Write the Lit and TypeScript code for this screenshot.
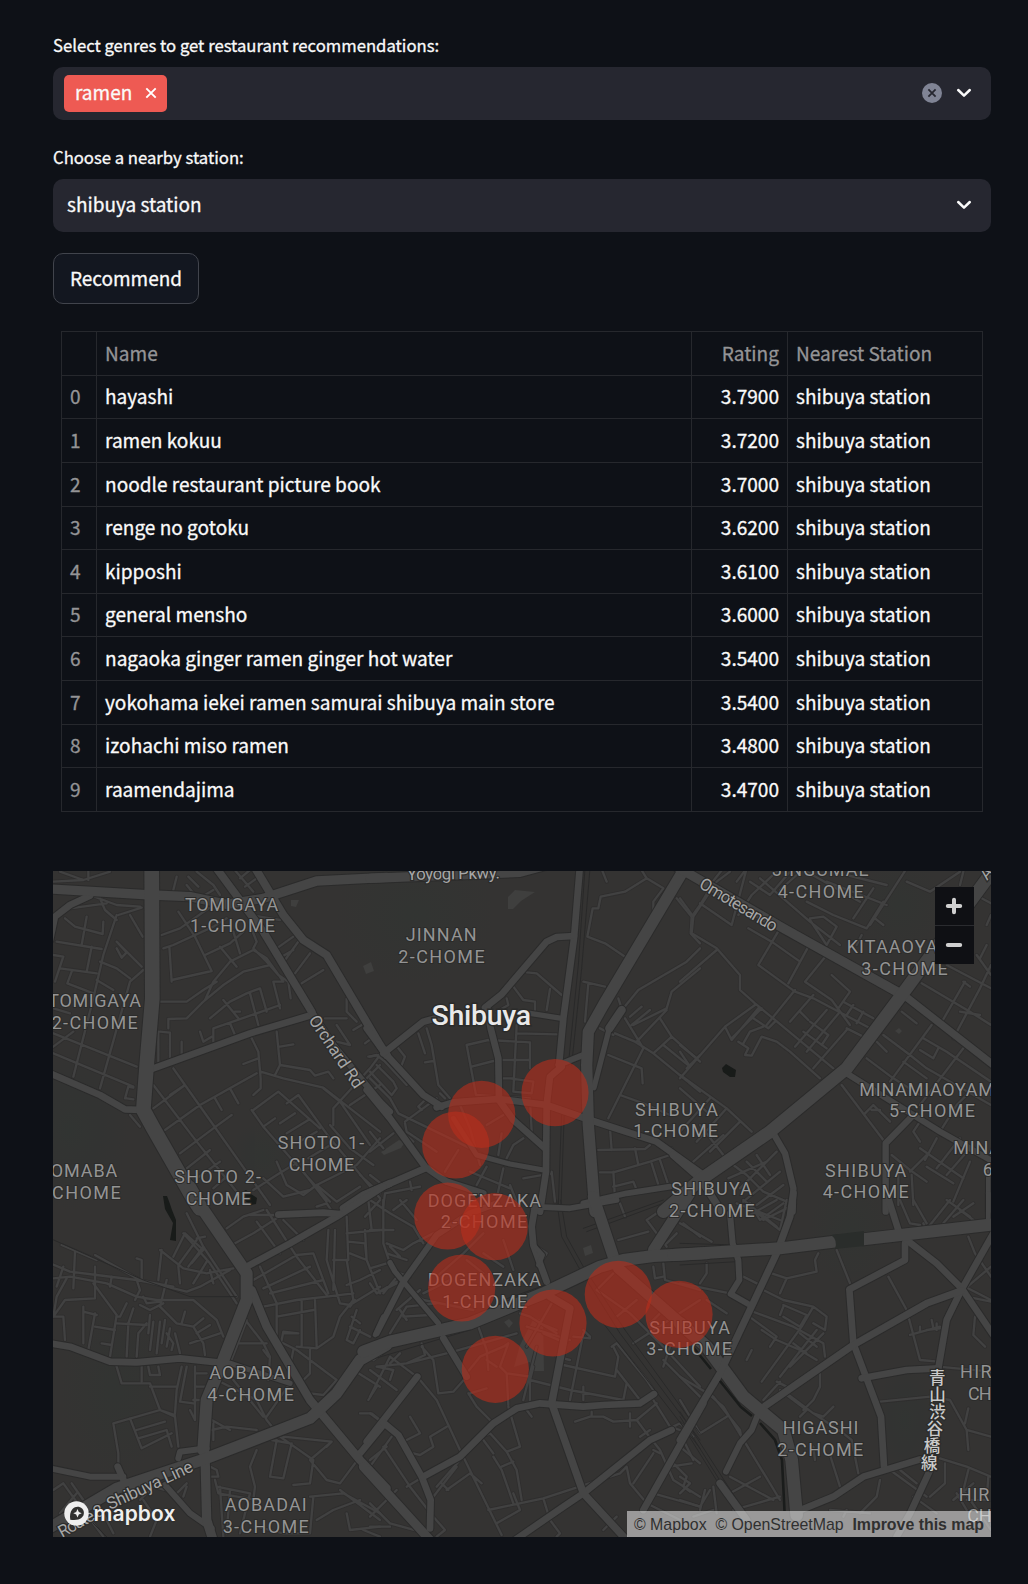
import { LitElement, html, css, svg } from "lit";
import { customElement, property } from "lit/decorators.js";

type Road = [width: number, path: string];
type Label = [x0: number, x1: number, baseline: number, text: string];

interface Sector {
  x: number;
  y: number;
  streets: string;
  roads: Road[];
  rails: string;
  labels: Label[];
}

/* Each sector is drawn at three units per pixel from its own origin. */
const SECTORS: Sector[] = [
  {
    x: 50, y: 865,
    streets: `M10 50L100 45L180 20M115 0L115 45M30 20L100 45M120 90L200 120L270 125M150 100L165 135L200 165M60 130L170 115
      M200 150L160 270L130 400L70 635M205 150L275 128M45 160L75 185L158 207L160 170M110 155L95 240M20 230L155 252M125 245L110 320M30 310L140 325
      M240 150L278 215M200 230L275 305M200 250L215 278L230 262L205 235M150 290L200 310L240 340M280 315L240 350L150 670M65 320L52 355L130 385M140 345L190 375
      M10 270L40 275L15 350M10 430L60 445M10 505L260 605M10 565L250 665M10 545L70 500M225 700L235 665L250 668M230 700L250 703
      M335 210L390 190L490 120M340 250L370 240L490 185L530 160M358 245L365 350M365 345L485 318L435 215L385 140M330 410L410 410L460 375L500 350M355 490L355 462L410 460L460 410L520 360L580 320L660 300
      M465 270L540 235L580 200M510 245L560 305M465 405L490 350L540 290L610 255L650 280L700 350L670 350L690 430M550 200L570 265M600 180L620 230L610 250L650 290L685 330L715 350L722 400
      M480 460L540 410L590 385L630 370L650 440M520 405L565 460M600 385L625 480M555 440L570 440M690 420L620 445L490 490L490 530M460 530L485 515M450 500L460 530M540 475L555 510
      M330 500L360 503L360 580M325 500L325 590M395 530L395 570M680 500L690 600L675 630M690 545L730 538M580 597L625 580M605 520L625 560L632 640L632 670L610 690
      M690 600L780 615L795 632L835 620L850 640M632 620L700 640L820 668L990 800M680 250L730 215M695 275L730 255M735 325L780 265M755 355L820 315M705 285L745 230M600 150L690 165
      M890 400L890 440L920 470M910 495L935 480M825 460L890 460M860 530L900 540M860 480L900 540M945 535L965 520M955 575L990 570
      M370 610L405 660L660 1020M310 660L440 830L560 980M310 730L405 660M345 795L450 720L620 625M390 865L490 790L545 750M410 910L480 855M440 940L510 890M490 970L530 935M540 670L565 715M495 700L515 735M405 660L360 690M240 750L270 785
      M610 735L685 680L810 790M605 735L640 785L675 760M640 785L740 900L840 1010M710 715L745 690L840 820L990 1000M690 775L735 745M710 805L775 765M740 835L800 800M775 880L850 835M610 975L680 930L745 890M680 890L710 960L760 990L800 960L920 900L990 820
      M640 940L700 995L780 975M760 920L830 1010M820 670L870 710L960 840M850 780L850 730L960 610L990 570M840 780L900 850L970 900M900 720L990 660M950 640L990 600M930 930L990 985M800 960L860 1010L930 965
      M370 75L380 35M415 35L445 65M410 60L430 85M440 20L490 60L510 90M465 90L490 75M550 10L610 80M570 40L600 15M585 65L620 40`,
    roads: [
      [20, "M0 225L15 155L60 120L120 92"], [20, "M0 625L150 690L225 733L280 735"], [20, "M300 614L600 505L785 450"],
      [23, "M492 0L640 200L785 440"], [19, "M785 440L850 540L990 710L1020 740"], [24, "M610 0L700 150L760 225L830 270L990 540L1010 570"],
      [28, "M0 72L305 90L420 95L530 118L640 100L800 48L1010 37"], [22, "M880 1030L940 990L1020 955"],
      [44, "M305 0L307 400L290 600L280 735L310 790L430 1000L450 1030"],
    ],
    rails: "",
    labels: [
      [405, 685, 137, "TOMIGAYA"], [420, 675, 202, "1-CHOME"], [-5, 273, 427, "TOMIGAYA"], [5, 263, 492, "2-CHOME"],
      [683, 943, 853, "SHOTO 1-"], [716, 913, 918, "CHOME"], [373, 633, 955, "SHOTO 2-"], [407, 604, 1020, "CHOME"],
      [-34, 202, 937, "KOMABA"], [-48, 212, 1002, "1-CHOME"],
    ],
  },
  {
    x: 370, y: 865,
    streets: `M690 0L710 50M990 250L950 290L805 375L760 430M805 0L830 40L880 70L850 110L850 150M830 40L765 80L692 95L685 130L668 130L652 215L705 235L765 275
      M920 100L965 155L962 205L990 235M965 155L990 120M640 350L705 365M655 355L645 470M745 400L755 430M990 310L905 380L890 430L790 480M870 460L905 515L990 590
      M470 322L500 325L575 390M540 372L530 435M430 365L460 405L495 410L495 440M410 400L415 420L380 440M440 505L560 508M440 480L430 680L485 685L490 650L420 640
      M290 540L355 525L480 532L480 610M290 540L318 690M305 605L370 588M385 585L480 585M400 640L430 640M145 505L165 565M170 490L185 540L205 660L240 700M165 592L190 588M210 685L225 700
      M0 575L20 570L45 590L110 660M20 600L70 650L80 670L65 690L0 620M85 550L105 575L95 600M145 725L170 700M145 725L155 735M105 770L200 700M0 640L60 700L85 745L260 830L340 870
      M0 800L40 850M50 760L130 830M0 860L70 805M0 930L45 965M105 775L110 800L200 860M120 950L125 975M40 1020L45 985L150 965M225 920L265 855M320 690L480 700L485 800
      M270 720L300 790L330 900M350 780L400 750M385 870L395 805M300 920L360 945L420 970M320 960L350 905M380 1000L400 910M350 880L460 900M410 880L430 840L460 820M420 960L440 1010M545 920L555 1010M460 940L545 925
      M735 505L795 530L850 565L990 680M765 460L820 550L715 760M800 530L890 435M780 455L815 425M785 480L840 435M850 565L905 515M880 540L960 605M950 610L990 570M715 570L815 610L818 655M750 690L820 715L900 750
      M690 490L730 510M720 790L725 855M685 855L825 852L840 840M690 922L730 922L840 890L900 870M795 850L805 900M730 920L735 1000M870 885L895 960M845 895L870 975M730 965L790 950L800 975M920 880L905 850`,
    roads: [
      [20, "M-10 490L45 565L160 690L215 725"], [20, "M40 565L160 470L215 455"], [20, "M345 428L395 388L530 230L560 216L612 213"],
      [20, "M352 430L362 490L385 580L387 705L430 765L525 850"], [16, "M480 445L575 460"], [20, "M-10 675L60 760L165 905L230 950L340 985"],
      [20, "M-20 990L165 910"], [15, "M250 760L320 870L420 897L525 916"], [20, "M630 0L612 220L580 460L568 590"], [18, "M565 600L645 568"],
      [20, "M575 605L540 635L530 720L528 920L510 1040"], [17, "M640 1015L770 985L900 965"], [20, "M200 727L250 712L385 702L530 720L660 765L860 830L1000 930"],
      [28, "M0 40L450 22L530 0"], [25, "M755 435L718 490"], [16, "M718 490L672 668"],
      [34, "M950 0L700 420L655 500L650 600L655 780L675 1040"],
    ],
    rails: "M645 10L625 300L595 600M660 10L635 310L605 600M575 740L565 1020M583 740L573 1020",
    labels: [
      [107, 320, 229, "JINNAN"], [85, 344, 294, "2-CHOME"], [795, 1044, 752, "SHIBUYA"], [790, 1044, 817, "1-CHOME"], [904, 1146, 990, "SHIBUYA"],
      [173, 513, 1025, "DOGENZAKA"],
    ],
  },
  {
    x: 680, y: 865,
    streets: `M0 100L40 155L35 205L110 250L180 330L180 375L225 415L460 610M110 255L0 350M60 115L155 180L200 10M40 155L110 50L150 20M175 150L215 90L300 10M205 190L275 230L360 290
      M60 120L90 70M85 60L180 100M130 10L90 60M170 50L200 10M240 40L390 170L480 240M210 50L270 90L330 20M300 75L350 30M390 160L430 155L470 185L440 240L390 165M380 110L460 150L560 190L610 110M440 50L620 120M380 20L540 110M500 30L620 60M570 180L680 10M520 160L580 70M585 160L610 180M680 50L750 80L840 20M840 60L850 20
      M300 190L235 300L345 380L400 400L590 500M385 245L325 355M440 270L375 350L455 405L510 480M455 330L510 380L475 430M345 375L260 480M400 390L330 470M440 435L345 545M480 440L380 560M500 490L560 520M500 495L400 610
      M490 410L580 460M520 420L500 450M550 440L530 475M390 470L445 510L425 540M370 500L440 550M360 440L385 465
      M135 485L155 525L235 430M135 485L225 420M135 485L0 640M155 520L245 430M220 460L265 490L285 470M175 530L205 550L195 570L215 572L245 515L290 530L330 560L420 640M190 535L210 500L250 485
      M0 540L50 580M0 560L30 605M0 630L140 730L215 800M90 700L0 800M140 730L50 830M180 770L90 860M60 780L130 870M40 890L130 810M0 670L80 740
      M545 210L530 240M610 510L690 570L740 610L933 720M665 440L710 475M590 530L620 560M560 580L640 640L720 690M755 480L630 650M850 550L720 720M725 355L870 440L933 480M780 480L855 350M820 520L900 370L933 300M730 520L800 560L933 650M670 590L740 640M720 555L760 580L775 550
      M840 440L900 450M850 350L870 365M890 270L933 330M800 300L933 370M900 280L920 240M920 180L933 150M905 100L933 115M485 660L610 825M555 745L580 720L630 770M575 735L600 735M720 830L700 800L720 770M780 800L830 720L870 680
      M720 850L850 940M740 905L820 955M735 885L770 820M770 910L840 820M800 930L870 850M690 920L740 870M635 870L690 915L740 950M655 1020L655 930M700 1020L695 930M820 1010L870 890
      M160 900L200 930L250 980L320 1010M200 890L260 950M230 870L270 930M145 940L260 890M180 970L290 860M190 1010L300 920M230 1020L310 960`,
    roads: [
      [18, "M500 625L700 750L780 800L860 845L940 890"], [19, "M700 750L617 835L617 1040"], [19, "M280 805L315 865L340 970L338 1040"],
      [22, "M-20 870L60 940L125 1040"], [14, "M925 920L925 1040"], [28, "M-10 5L310 190L665 388"], [22, "M675 393L940 600"],
      [38, "M940 15L680 370L500 610L270 800L60 945L-50 1040"],
    ],
    rails: "",
    labels: [
      [277, 566, 33, "JINGUMAE"], [293, 551, 98, "4-CHOME"], [500, 862, 265, "KITAAOYAMA"], [544, 803, 330, "3-CHOME"],
      [538, 980, 692, "MINAMIAOYAMA"], [627, 885, 756, "5-CHOME"], [820, 1262, 867, "MINAMIAOYAMA"], [908, 1170, 932, "6-CHOME"],
      [435, 679, 935, "SHIBUYA"], [428, 686, 1000, "4-CHOME"],
    ],
  },
  {
    x: 50, y: 1200,
    streets: `M0 190L60 215L140 225L260 240L370 260M35 135L140 180M75 155L70 265M135 165L270 240L410 275L450 260L540 210M10 235L60 230L170 250L260 290L320 300L430 300L500 360L520 410M20 260L40 200M260 175L275 180L275 240M185 230L180 260M135 200L135 290M130 250L200 345L180 470
      M50 235L20 290L10 350L40 350L45 420M10 350L45 300L135 295M100 320L100 430M135 340L115 450M100 335L140 345M135 380L195 390M155 430L185 435M230 310L210 350L200 350M250 325L235 370L230 470M290 370L265 400L260 470M200 370L290 375M300 345L295 400M310 365L300 450M330 365L320 460M345 360L335 430M350 400L370 430L365 450M360 385L350 440M375 400L390 460
      M260 240L270 270L255 300M270 315L300 330L340 310M280 290L290 310L330 305M350 240L330 320L380 370L430 380L460 430L465 465M420 430L510 400M430 380L460 355M440 400L480 375M405 335L395 370
      M330 150L400 205L470 220L550 205M335 150L325 240M370 170L405 100L460 150L435 175M385 195L440 120M415 200L460 140M400 100L480 190L560 310M430 250L470 185M410 40L460 140L560 290M480 210L490 250M385 200L390 250M440 115L465 110M425 190L450 160
      M530 85L580 50L640 30M555 130L610 100L680 55M600 45L680 45M620 65L690 160M650 30L740 170L830 285M700 60L760 120M610 240L740 165L790 160L835 280M640 265L780 200M660 280L820 240M630 200L680 310L680 420M640 320L740 300L830 290L910 280
      M800 20L830 10L850 40M835 90L830 180L870 310L900 315L990 260M855 90L850 270M890 50L895 180L850 180M890 100L990 90M895 125L945 130L950 180L900 160M945 50L990 0M955 0L965 90M890 180L910 300M945 90L950 180L990 280M890 255L930 240L990 210
      M910 300L870 350L850 410L800 445L740 440M680 350L790 330M755 300L755 440M795 300L800 440M915 300L900 320M905 350L930 370M900 380L960 410M920 330L890 420L910 430L930 390M700 400L740 400M695 420L700 395L745 400M680 420L740 450L860 540M780 450L780 520L760 540M730 450L720 500
      M590 365L640 430L660 470L655 540M560 430L650 430M640 450L655 470M540 490L560 440L590 360M780 580L820 585L860 540
      M200 500L215 550L300 550L330 630L375 650L385 740M275 500L275 545M300 560L380 560M395 500L380 570L375 640M295 500L300 525L330 525L325 500M410 500L390 605L430 610M435 500L435 660M435 520L470 520M435 560L470 560M430 600L460 600M420 630L435 660
      M375 645L330 630L190 670L205 760L205 800M240 655L275 745L365 700M260 690L345 665M265 715L350 690L365 740M485 690L530 680L620 690M485 660L540 690M500 540L620 600L650 660L690 710L790 780L780 850M550 540L640 650M650 650L720 550M490 670L490 720
      M620 750L600 800L615 860L610 900M680 720L660 830L700 835L725 730M665 720L720 730M700 710L845 725L780 780L830 840L870 850M730 855L780 850M780 890L880 880L990 940M800 960L850 930L930 900M890 940L900 990L990 980M845 725L830 740M870 870L990 960
      M500 860L600 880L570 1000M510 860L520 1010M540 870L530 1000M495 840L505 880L620 900M480 800L500 810L505 830L485 830M620 980L700 1000L780 1000L790 890M410 860L400 890M10 870L40 850L90 920M65 850L100 900M30 940L80 880M270 900L310 860L380 880L410 850M280 900L320 960L300 1010M100 930L160 1010M140 900L190 1000M940 990L990 1010
      M955 600L980 560M870 850L930 770L990 850M910 510L990 560M930 640L965 640L990 660`,
    roads: [
      [18, "M0 805L120 830L220 830"], [20, "M203 800L225 850"], [18, "M385 775L390 755L470 745"], [18, "M345 855L420 940L485 985"],
      [20, "M922 770L1000 675"], [14, "M975 405L1000 350"], [16, "M540 490L720 550"], [20, "M0 430L60 440L180 485L260 487L390 475L530 490"],
      [20, "M590 200L720 130L860 50L1000 -40"], [20, "M685 44L820 38L870 42"], [25, "M605 270L650 380L780 600L930 780L1010 865"],
      [28, "M465 760L470 960L492 1030"], [36, "M420 -40L460 30L590 220L590 300L520 480L470 600L460 750"],
      [34, "M-30 1000L200 865L470 775L780 655L860 580L930 480L1010 435"],
    ],
    rails: "M0 115L280 240L420 290L560 290M480 790L480 940L500 1010M130 970L170 1010",
    labels: [
      [478, 724, 537, "AOBADAI"], [472, 732, 602, "4-CHOME"], [524, 770, 933, "AOBADAI"], [518, 776, 998, "3-CHOME"],
    ],
  },
  {
    x: 370, y: 1200,
    streets: `M0 0L60 40L130 80L160 130M40 0L40 130L60 190M50 130L100 150L130 130L190 100M50 160L110 180M60 140L90 170M0 90L70 90M90 0L140 60M70 30L110 0M0 205L50 190M0 250L20 280L80 250M40 280L90 220L120 230M20 280L80 245M120 270L160 300L310 330M60 400L110 320L200 310M100 350L180 345M80 330L150 270M90 330L110 360M160 280L240 240M200 230L280 160L340 100
      M400 120L430 210M340 160L400 200M290 180L340 220M500 140L530 160L510 190M155 430L165 465L110 490L20 500M110 490L250 455L440 400M155 440L190 480L205 580L250 575L290 530M0 510L80 570M60 470L30 530L0 590M20 500L70 510L60 540M60 470L140 530M10 480L50 450M90 460L60 490
      M325 380L350 450L355 510M290 520L330 470L400 440L415 430L390 500L410 520L415 615M350 480L380 500M410 520L480 530M295 580L320 620L360 660M300 580L350 565M480 610L480 540L600 570L760 600M545 310L470 440M470 380L600 420M510 370L560 390M520 400L590 430M450 340L480 350L560 400M500 440L460 600
      M580 495L735 530M640 400L600 600M640 560L640 600M770 550L760 600M735 530L745 470L730 440M725 440L740 430L830 540L850 570M740 510L810 600M640 390L660 410M560 470L600 480M610 410L660 415
      M200 600L270 750L395 1005M150 540L200 600M120 650L150 700L110 720M230 680L180 710L190 740L150 765L130 760M200 860L270 780M190 890L260 800M230 870L300 820L335 850M215 850L235 870M110 860L160 830M40 740L120 860L190 950L225 990L200 1010
      M415 620L450 740L410 755L360 700L310 720M340 720L370 760M370 770L395 810L430 910M410 755L440 810L455 900M395 800L430 785M355 930L520 895L750 820L770 800M380 970L450 930L430 880M520 895L540 960L570 1000L560 1010M0 910L60 970L170 1000M0 980L60 980M65 710L0 800M0 780L50 740M0 950L80 870M0 640L40 670
      M615 665L660 650L700 650L730 665L800 660L860 610M780 640L780 680M665 635L665 650M470 630L485 650M800 660L830 700L870 750L910 840L990 890M850 600L900 680L930 690M810 710L840 690M770 800L780 850L830 910L930 960M790 850L850 760M850 750L870 760M910 790L950 830L940 860L960 875M900 800L965 790M850 880L920 900L990 920M910 680L930 670L970 710M930 740L990 790
      M680 270L780 340L870 430L990 560M680 270L730 220M740 350L800 300M790 430L990 300M880 500L900 440M840 370L880 330M850 200L855 235L880 230M880 190L885 240L990 270M745 120L835 95M750 10L765 50M830 60L890 140M830 60L860 40L950 20M890 130L920 100M940 70L990 110M880 480L990 590M700 990L740 950M480 540L490 500`,
    roads: [
      [18, "M20 400L100 245L200 105L300 40L380 10"], [16, "M60 188L75 215L100 245L205 370"], [20, "M220 415L290 530"],
      [20, "M-10 725L142 530"], [20, "M40 668L85 705L155 830L182 900L180 985"], [27, "M-20 800L180 1020"],
      [20, "M495 20L485 80L490 135L530 245"], [14, "M490 135L518 165L505 195"], [17, "M490 20L600 25L740 0"],
      [20, "M160 830L270 770L370 670L440 625L510 610L640 620L700 615L810 610L852 582"],
      [20, "M435 1020L580 920L640 880L840 720L905 690"], [22, "M540 290L600 325L545 610L640 880L765 1015"], [20, "M1000 610L820 930"],
      [34, "M670 -10L730 170"], [32, "M960 -20L850 150"], [32, "M745 205L830 280L1000 430"],
      [36, "M-20 455L60 425L300 370L520 280L690 200L760 180L850 168L1010 160"],
    ],
    rails: "M560 0L575 110L625 200L750 400L990 720M572 0L590 110L640 200L765 390L990 700M640 85L880 0M650 95L880 10M700 370L990 745M0 480L300 390L520 300L640 245M400 300L540 250",
    labels: [
      [212, 472, 84, "2-CHOME"], [173, 513, 259, "DOGENZAKA"], [217, 472, 323, "1-CHOME"], [897, 1154, 51, "2-CHOME"],
      [838, 1080, 402, "SHIBUYA"], [829, 1086, 466, "3-CHOME"],
    ],
  },
  {
    x: 680, y: 1200,
    streets: `M0 70L95 125M170 10L300 60M200 50L290 0M220 30L300 90L320 0M250 60L330 20M190 0L290 80M210 10L240 60L310 10M80 190L80 220L60 250M0 250L150 280M190 230L250 260M275 220L320 235L410 215L405 180L415 160M320 235L300 280M250 270L310 300L400 320L440 350L435 390L400 370M310 320L300 345M310 315L380 345L360 380L310 350
      M205 330L340 380L430 430L435 470M215 355L290 410M400 320L365 380L245 545M410 390L300 530M430 400L330 500M290 410L270 440M340 430L380 460M360 400L410 440M215 450L200 480M245 390L290 420L360 450L410 480M290 545L320 560M300 570L380 630L360 650
      M420 520L420 560L400 600L370 630M250 600L300 545M270 610L290 590M320 580L400 640L490 700L515 720L535 820M400 640L430 650L460 620M450 765L480 860M400 740L405 780M470 150L510 250M625 230L680 330L720 480L775 485M690 405L780 380M720 380L720 395M755 360L760 385M770 370L770 390M740 390L780 385
      M600 605L750 590L810 600L860 690L865 750M860 690L933 710M865 625L855 670M775 500L933 515M885 350L880 405L915 440M860 290L933 305M865 110L885 160L933 230M850 270L933 200M855 260L933 300M660 0L690 70L720 75M700 0L740 70M750 75L810 0M790 70L850 0M820 50L880 10M840 30L880 60M800 0L870 50M740 90L730 70
      M780 775L860 800L933 830M795 790L795 850L750 890M865 810L850 870L933 990M925 830L920 900L860 900M700 890L770 940M630 810L740 890M600 840L590 890L540 940M660 810L710 850M830 880L860 930M820 900L880 850M450 930L570 940M500 930L490 950
      M0 370L60 430M0 530L100 590L180 690L185 720M95 590L130 620L300 900M0 600L60 700L140 650M10 720L40 780M150 830L280 900M150 880L240 830M160 930L300 890M100 860L110 940M75 870L60 930M0 830L30 850L0 880M0 900L60 920L90 870M40 950L100 930M80 300L140 340`,
    roads: [
      [18, "M150 40L158 130L175 180L178 240L152 282L210 315"], [20, "M620 -20L655 90"], [20, "M675 130L675 180L508 268L520 430L603 650L612 800"],
      [20, "M680 120L770 190L845 265L940 405"], [20, "M940 100L845 268L800 360L775 505"], [21, "M845 272L740 310L520 435L245 625"],
      [20, "M545 535L680 510L775 505"], [20, "M350 935L460 890L550 830L720 778"], [20, "M748 815L690 940L650 1010"],
      [18, "M235 640L215 690L180 730L138 815"], [22, "M120 850L200 960"], [14, "M925 -20L925 60"],
      [38, "M0 370L80 440L190 590L310 690L335 780L350 945"], [21, "M340 -20L330 50L290 160L120 520L0 720"],
      [36, "M-20 165L300 145L470 124"], [36, "M550 118L940 73"],
    ],
    rails: "M0 635L190 930M0 650L175 930M0 665L165 930M0 195L170 185M0 130L170 135",
    labels: [
      [308, 535, 702, "HIGASHI"], [292, 550, 767, "2-CHOME"], [840, 935, 535, "HIR"],
      [864, 935, 599, "CH"], [836, 928, 902, "HIR"], [862, 935, 966, "CH"],
    ],
  },
];

/* Latin place names that follow a road: anchor, angle, length. */
const ROAD_NAMES = [
  { x: 407, y: 880, angle: -1, length: 93, text: "Yoyogi Pkwy." },
  { x: 698, y: 887, angle: 31, length: 88, text: "Omotesando" },
  { x: 308, y: 1020, angle: 56, length: 84, text: "Orchard Rd" },
  { x: 62, y: 1538, angle: -29, length: 50, text: "Route 3" },
  { x: 110, y: 1510, angle: -25, length: 93, text: "Shibuya Line" },
  { x: 987, y: 881, angle: -50, length: 13, text: "A" },
];

const KANJI = [
  ["青", 937.3, 1384], ["山", 937.6, 1401], ["渋", 937.5, 1418],
  ["谷", 934.8, 1435], ["橋", 932, 1452], ["線", 929.3, 1469],
] as const;

const PLACES = [
  [555, 1092.7], [481.7, 1114.3], [455.7, 1145], [447.7, 1216], [494.3, 1226.7],
  [461.7, 1288], [553, 1323], [618.3, 1294.3], [679, 1314.3], [495.3, 1369.3],
];

@customElement("station-map")
export class StationMap extends LitElement {
  static styles = css`
    :host { display: block; position: relative; height: 666px; overflow: hidden; background: #343332; }
    .canvas { display: block; width: 938px; height: 666px; }
    .line { fill: none; stroke-linejoin: round; stroke-linecap: round; }
    .street-case { stroke: #2f2e2e; stroke-width: 12; }
    .street { stroke: #414141; stroke-width: 7; }
    .case { stroke: #2b2b2b; }
    .road { stroke: #454545; }
    .rail { stroke: #292929; stroke-width: 3; }
    .canal { fill: none; stroke: #1a1c1b; stroke-width: 2.6; }
    .label { font: 400 54px Roboto, "Liberation Sans", sans-serif; fill: #949494; stroke: #2b2b2a; stroke-width: 6; paint-order: stroke; }
    .road-name { font: 400 17px Roboto, "Liberation Sans", sans-serif; fill: #a6a6a6; stroke: #2c2c2b; stroke-width: 2.5; paint-order: stroke; }
    .kanji { font: 500 16.5px "Noto Sans CJK JP", sans-serif; fill: #cacaca; stroke: #2c2c2b; stroke-width: 2.5; paint-order: stroke; text-anchor: middle; }
    .city { font: 500 28.5px Roboto, "Liberation Sans", sans-serif; fill: #e9e9e9; stroke: #2b2b2a; stroke-width: 3; paint-order: stroke; }
    .park { opacity: 0.55; }
    .place { fill: rgb(185, 46, 28); fill-opacity: 0.61; }
    .zoom { position: absolute; top: 16px; right: 17px; width: 39px; height: 77px; background: #0f1014; display: grid; grid-template-rows: 38px 38px; row-gap: 1px; }
    .zoom-button { display: grid; place-items: center; padding: 0 1px 0 0; border: 0; background: transparent; }
    .zoom-button + .zoom-button { box-shadow: 0 -1px #2a2b2f; }
    .logo { position: absolute; left: 10.5px; bottom: 11px; display: flex; align-items: center; gap: 5px; }
    .wordmark { font: 600 21px Inter, sans-serif; color: #efefef; line-height: 24px; letter-spacing: 0.1px; text-shadow: 0 0 2px #222; }
    .credits { position: absolute; right: 0; bottom: 0; height: 26px; width: 364px; box-sizing: border-box; padding: 1px 7px 0 7px; display: flex; justify-content: space-between; align-items: center; background: rgba(255, 255, 255, 0.5); color: #303030; font: 15.9px/26px "Liberation Sans", sans-serif; white-space: nowrap; }
    .credits b { font-weight: 700; }
  `;

  private layer(draw: (s: Sector) => unknown) {
    return SECTORS.map((s) => svg`<g transform="translate(${s.x} ${s.y}) scale(0.33333)">${draw(s)}</g>`);
  }

  render() {
    return html`
      <svg class="canvas" viewBox="53 871 938 666">
        <defs>
          <radialGradient id="park"><stop offset="0" stop-color="#303532" /><stop offset="1" stop-color="#303532" stop-opacity="0" /></radialGradient>
        </defs>
        <g class="park" fill="url(#park)">
          <ellipse cx="415" cy="915" rx="80" ry="70" />
          <ellipse cx="70" cy="1130" rx="60" ry="80" />
          <ellipse cx="115" cy="1390" rx="55" ry="90" />
          <ellipse cx="262" cy="1155" rx="32" ry="32" />
          <ellipse cx="905" cy="1420" rx="30" ry="55" />
          <ellipse cx="850" cy="1230" rx="40" ry="55" />
          <ellipse cx="900" cy="905" rx="45" ry="45" />
        </g>
        <path fill="#3f3f3e" d="M508 897L515 890L535 892L521 901L513 909L508 909ZM363 966L371 962L374 971L366 974ZM291 900L299 900L296 907L291 906ZM895 1031L899 1028L902 1031L899 1034ZM381 1152L399 1140L405 1142L401 1148L384 1155ZM583 1248L591 1245L593 1253L585 1256ZM504 1322L509 1319L513 1323L509 1328ZM520 1345L534 1318L543 1320L544 1371L532 1371L530 1362L514 1367Z" />
        <path fill="#181b19" d="M722 1068L726 1064L736 1070L735 1077L730 1077L723 1072ZM163 1196L167 1196L170 1204L172 1210L176 1220L176 1241L170 1240L173 1223L165 1209ZM242 1192L246 1190L251 1194L257 1198L256 1204L251 1205L244 1200Z" />
        ${this.layer((s) => svg`<path class="line street-case" d=${s.streets} />`)}
        ${this.layer((s) => svg`<path class="line street" d=${s.streets} />`)}
        ${this.layer((s) => svg`<path class="line rail" d=${s.rails} />`)}
        ${this.layer((s) => s.roads.map(([w, d]) => svg`<path class="line case" stroke-width=${w + 6} d=${d} />`))}
        ${this.layer((s) => s.roads.map(([w, d]) => svg`<path class="line road" stroke-width=${w} d=${d} />`))}
        <path class="canal" d="M693 1347L711 1369M720 1381L741 1407L752 1416M760 1423L775 1440L782 1460L784.5 1511" />
        <path fill="#2a2d2b" d="M831 1235L864 1231L864 1246L835 1249Q838 1240 831 1235Z" />
        ${this.layer((s) => s.labels.map(([x0, x1, y, text]) => svg`<text class="label" x=${x0} y=${y} textLength=${x1 - x0}>${text}</text>`))}
        ${ROAD_NAMES.map((n) => svg`<text class="road-name" transform="translate(${n.x} ${n.y}) rotate(${n.angle})" textLength=${n.length}>${n.text}</text>`)}
        ${KANJI.map(([c, x, y]) => svg`<text class="kanji" x=${x} y=${y - 0.5}>${c}</text>`)}
        <text class="city" x="431.5" y="1025" textLength="99.5">Shibuya</text>
        ${PLACES.map(([x, y]) => svg`<circle class="place" cx=${x} cy=${y} r="33.6" />`)}
      </svg>
      <div class="zoom">
        <button class="zoom-button" aria-label="Zoom in">
          <svg width="18" height="18"><path d="M9 2.8V15.2M2.8 9H15.2" stroke="#d0d0d0" stroke-width="4" stroke-linecap="round" /></svg>
        </button>
        <button class="zoom-button" aria-label="Zoom out">
          <svg width="18" height="18"><path d="M2.8 9H15.2" stroke="#d0d0d0" stroke-width="4" stroke-linecap="round" /></svg>
        </button>
      </div>
      <div class="logo">
        <svg width="25" height="25" viewBox="0 0 25 25">
          <circle cx="12.5" cy="12.5" r="12.2" fill="#efefef" />
          <path fill="#30302f" d="M6.3 18.7C5.6 15 6 10.6 8.5 8C11.2 5.2 15.5 5.1 18 7.5C20.6 10 20.5 14 17.8 16.6C15 19.2 10.5 19.4 6.3 18.7Z" />
          <path fill="#efefef" d="M13.5 8L14.8 10.9L17.7 12.2L14.8 13.5L13.5 16.4L12.2 13.5L9.3 12.2L12.2 10.9Z" />
        </svg>
        <span class="wordmark">mapbox</span>
      </div>
      <div class="credits"><span>© Mapbox</span><span>© OpenStreetMap</span><b>Improve this map</b></div>
    `;
  }
}

@customElement("select-box")
export class SelectBox extends LitElement {
  @property() label = "";
  @property() value = "";
  @property({ type: Boolean }) multiple = false;

  static styles = css`
    :host { display: block; }
    .label { height: 28px; line-height: 28px; font-size: 16.7px; letter-spacing: -0.01px; }
    .box { display: flex; align-items: center; height: 53px; margin-top: 8px; padding: 0 17px 1px 11px; box-sizing: border-box; border-radius: 10px; background: #262730; }
    .value { flex: 1; padding: 0 0 2px 3px; font-size: 19.05px; line-height: 28px; }
    .tags { flex: 1; display: flex; }
    .tag { display: flex; align-items: center; gap: 12.5px; height: 37px; padding: 0 10px 0 11px; border-radius: 5px; background: #ee5a53; font-size: 19px; line-height: 28px; box-sizing: border-box; width: 103px; }
    .tag-text { padding-bottom: 2px; }
    .icons { display: flex; align-items: center; gap: 12px; }
    svg { display: block; }
  `;

  render() {
    return html`
      <div class="label">${this.label}</div>
      <div class="box">
        ${this.multiple
          ? html`<div class="tags"><span class="tag"><span class="tag-text">${this.value}</span>
              <svg width="12" height="12"><path d="M1.3 1.3L10.7 10.7M10.7 1.3L1.3 10.7" stroke="#fff" stroke-width="1.9" /></svg></span></div>`
          : html`<div class="value">${this.value}</div>`}
        <div class="icons">
          ${this.multiple
            ? html`<svg width="20" height="20"><circle cx="10" cy="10" r="10" fill="#808495" /><path d="M6.4 6.4L13.6 13.6M13.6 6.4L6.4 13.6" stroke="#262730" stroke-width="1.8" /></svg>`
            : null}
          <svg width="20" height="20"><path d="M4.2 7L10 12.6L15.8 7" fill="none" stroke="#fafafa" stroke-width="2.5" stroke-linecap="round" stroke-linejoin="round" /></svg>
        </div>
      </div>
    `;
  }
}

const ROWS: [string, string][] = [
  ["hayashi", "3.7900"],
  ["ramen kokuu", "3.7200"],
  ["noodle restaurant picture book", "3.7000"],
  ["renge no gotoku", "3.6200"],
  ["kipposhi", "3.6100"],
  ["general mensho", "3.6000"],
  ["nagaoka ginger ramen ginger hot water", "3.5400"],
  ["yokohama iekei ramen samurai shibuya main store", "3.5400"],
  ["izohachi miso ramen", "3.4800"],
  ["raamendajima", "3.4700"],
];

@customElement("app-root")
export class AppRoot extends LitElement {
  static styles = css`
    :host { display: block; box-sizing: border-box; height: 1584px; padding: 31px 37px 0 53px; background: #0e1117; color: #fafafa; font-family: "Noto Sans CJK JP", "Noto Sans", sans-serif; overflow: hidden; -webkit-text-stroke: 0.3px currentColor; }
    station-map { -webkit-text-stroke: 0; }
    .station { margin-top: 23px; }
    .recommend { display: block; margin-top: 21px; width: 146px; height: 51px; padding: 0 0 3px; border: 1px solid #41444c; border-radius: 10px; background: #131720; color: #fafafa; font-family: inherit; font-size: 19px; -webkit-text-stroke: inherit; }
    .table { margin: 27px 8px 59px; display: grid; grid-template-columns: 35px 595px 96px 195px; grid-template-rows: 44px 43px 44px 44px 43px 44px 43px 44px 44px 43px 44px; width: 922px; box-sizing: border-box; border-top: 1px solid #26282d; border-left: 1px solid #26282d; font-size: 19.07px; }
    .cell { display: flex; align-items: center; box-sizing: border-box; padding: 0 8px 3px; border-right: 1px solid #26282d; border-bottom: 1px solid #26282d; white-space: nowrap; }
    .muted { color: #949496; }
    .number { justify-content: flex-end; }
  `;

  render() {
    return html`
      <select-box multiple label="Select genres to get restaurant recommendations:" value="ramen"></select-box>
      <select-box class="station" label="Choose a nearby station:" value="shibuya station"></select-box>
      <button class="recommend">Recommend</button>
      <div class="table">
        <div class="cell"></div>
        <div class="cell muted">Name</div>
        <div class="cell muted number">Rating</div>
        <div class="cell muted">Nearest Station</div>
        ${ROWS.map(([name, rating], i) => html`
          <div class="cell muted">${i}</div>
          <div class="cell">${name}</div>
          <div class="cell number">${rating}</div>
          <div class="cell">shibuya station</div>
        `)}
      </div>
      <station-map></station-map>
    `;
  }
}
